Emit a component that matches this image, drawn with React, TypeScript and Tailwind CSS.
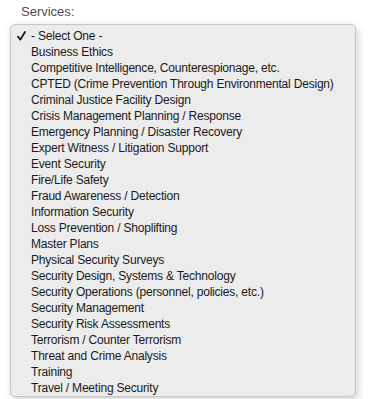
import React from 'react'

const services = [
  '- Select One -',
  'Business Ethics',
  'Competitive Intelligence, Counterespionage, etc.',
  'CPTED (Crime Prevention Through Environmental Design)',
  'Criminal Justice Facility Design',
  'Crisis Management Planning / Response',
  'Emergency Planning / Disaster Recovery',
  'Expert Witness / Litigation Support',
  'Event Security',
  'Fire/Life Safety',
  'Fraud Awareness / Detection',
  'Information Security',
  'Loss Prevention / Shoplifting',
  'Master Plans',
  'Physical Security Surveys',
  'Security Design, Systems & Technology',
  'Security Operations (personnel, policies, etc.)',
  'Security Management',
  'Security Risk Assessments',
  'Terrorism / Counter Terrorism',
  'Threat and Crime Analysis',
  'Training',
  'Travel / Meeting Security',
]

function Check() {
  return (
    <svg width="9" height="10" viewBox="0 0 9 10" className="ml-[6px]">
      <path d="M1 5.6 L3.4 8.6 L8 1" fill="none" stroke="#1a1a1a" strokeWidth="1.8" strokeLinecap="round" strokeLinejoin="round" />
    </svg>
  )
}

export default function App() {
  return (
    <div
      className="h-[399px] w-[392px] overflow-hidden bg-white"
      style={{ fontFamily: '"Liberation Sans", Arial, sans-serif' }}
    >
      <div className="pl-[21px] pt-[4px] text-[13px] leading-[16px] text-[#4d4d4d]">Services:</div>
      <div className="ml-[10px] mt-[4px] w-[346px] rounded-[5px] border border-[#c6c6c6] bg-[#ececec] pt-[3px] shadow-[2px_3px_8px_rgba(0,0,0,0.18)]">
        {services.map((s, i) => (
          <div key={s} className="flex h-[16px] items-center whitespace-nowrap text-[12px] leading-[16px] tracking-[-0.2px] text-[#1a1a1a]">
            <span className="flex w-[20px] items-center">{i === 0 ? <Check /> : null}</span>
            <span>{s}</span>
          </div>
        ))}
      </div>
    </div>
  )
}
